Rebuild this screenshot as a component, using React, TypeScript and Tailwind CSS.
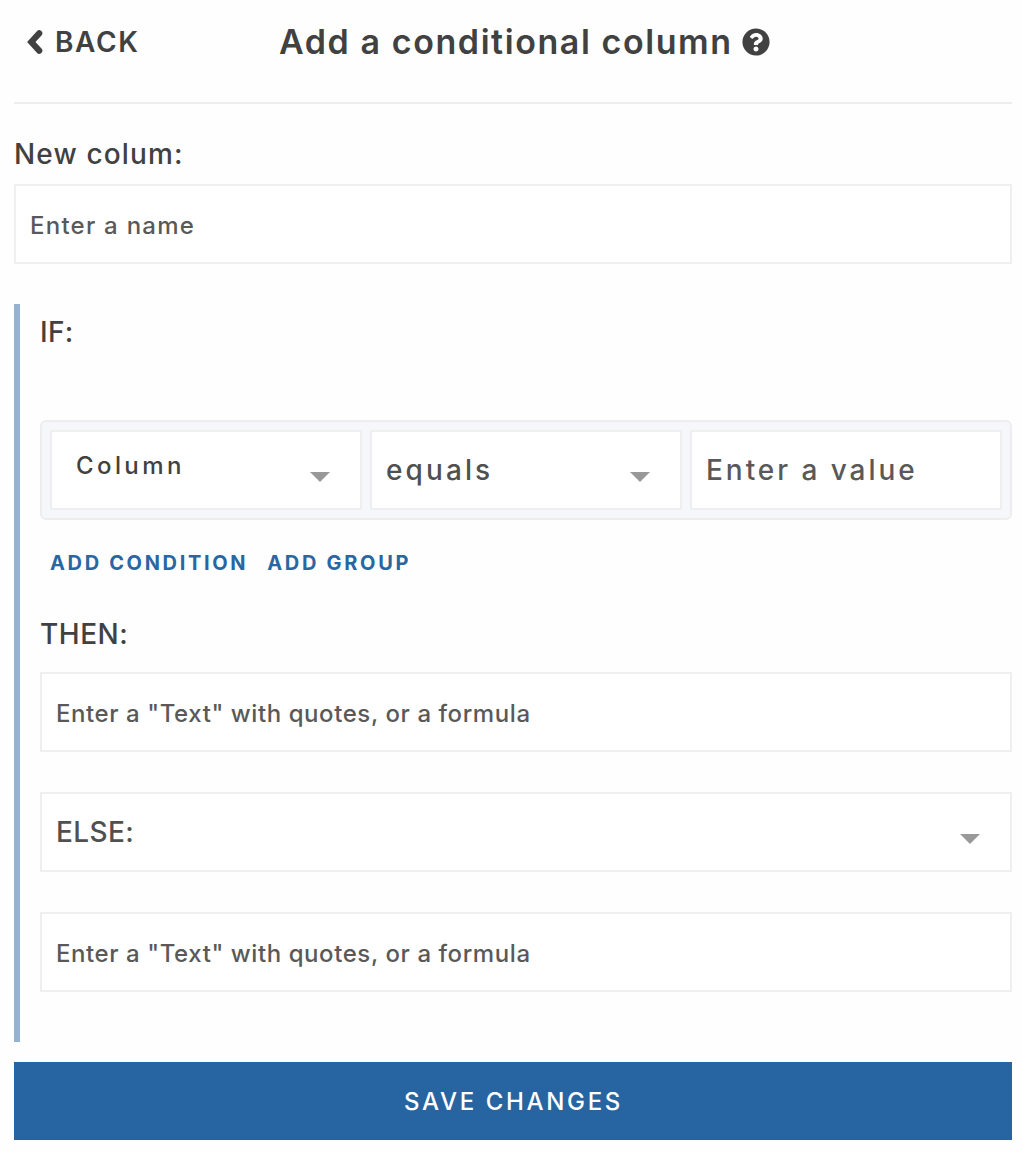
import type { ReactNode } from "react";
import { FaQuestionCircle } from "react-icons/fa";

function Caret() {
  return (
    <svg className="h-[10px] w-5 shrink-0" viewBox="0 0 20 10" aria-hidden="true">
      <path d="M0 0H20L10 10Z" fill="#999999" />
    </svg>
  );
}

function BackChevron() {
  return (
    <svg className="mr-3 h-6 w-4 shrink-0" viewBox="0 0 16 24" fill="none" aria-hidden="true">
      <path d="M12.2 3.3L4.3 12L12.2 20.7" stroke="currentColor" strokeWidth="6.2" strokeLinecap="round" />
    </svg>
  );
}

function Box({ children, className = "" }: { children: ReactNode; className?: string }) {
  return (
    <div className={`flex h-20 border-2 border-[#efefef] bg-white ${className}`}>{children}</div>
  );
}

function FormulaField() {
  return (
    <Box className="items-center pl-[14px] pt-[4px] text-2xl tracking-[0.58px] text-[#595959]">
      Enter a "Text" with quotes, or a formula
    </Box>
  );
}

export default function App() {
  return (
    <main className="min-h-[1152px] bg-[#fefefe] pl-[14px] pr-[10px] font-['Inter',sans-serif] font-medium text-[#414141]">
      <header className="flex h-[104px] items-start border-b-2 border-[#ededed] pt-[18px]">
        <button className="flex h-12 w-[265px] items-center pl-[13px] text-[28px] font-semibold tracking-[1.6px]">
          <BackChevron />
          BACK
        </button>
        <h1 className="-mt-px flex h-12 items-center text-[34px] font-semibold tracking-[1.58px]">
          Add a conditional column
          <FaQuestionCircle className="ml-[9px] mt-px size-7" />
        </h1>
      </header>

      <label className="mt-[30px] flex h-10 items-center text-[28px] tracking-[1.15px]">New colum:</label>
      <Box className="mt-[10px] items-center pl-[14px] pt-[4px] text-2xl tracking-[1.25px] text-[#595959]">
        Enter a name
      </Box>

      <section className="mt-10 h-[738px] border-l-[6px] border-[#96b2d2] pl-5">
        <div className="flex h-14 items-center text-[28px] tracking-[0.3px]">IF:</div>

        <div className="mt-[60px] grid h-[100px] grid-cols-3 gap-2 rounded-md border-2 border-[#ededed] bg-[#f5f7fb] p-2">
          <Box className="items-center justify-between pl-[24px] pr-[30px]">
            <span className="-mt-2 text-2xl tracking-[3.4px]">Column</span>
            <span className="mt-[13px]"><Caret /></span>
          </Box>
          <Box className="items-center justify-between pl-[14px] pr-[30px] text-[#505050]">
            <span className="text-[28px] tracking-[3.1px]">equals</span>
            <span className="mt-[13px]"><Caret /></span>
          </Box>
          <Box className="items-center pl-[14px] text-[28px] tracking-[2.95px] text-[#595959]">Enter a value</Box>
        </div>

        <div className="mt-[28px] flex h-[30px] items-center gap-[19px] pl-[10px] text-xl font-bold text-[#2a66a2]">
          <button className="tracking-[2.65px]">ADD CONDITION</button>
          <button className="tracking-[2.7px]">ADD GROUP</button>
        </div>

        <div className="mt-[36px] flex h-10 items-center text-[28px] tracking-[0.5px]">THEN:</div>
        <div className="mt-[18px] grid gap-10">
          <FormulaField />
          <Box className="items-center justify-between pl-[14px] pr-[30px] text-[#505050]">
            <span className="text-[28px] tracking-[0.4px]">ELSE:</span>
            <span className="mt-[13px]"><Caret /></span>
          </Box>
          <FormulaField />
        </div>
      </section>

      <button className="mt-5 h-[78px] w-full bg-[#2765a2] pl-px pt-[2px] text-2xl tracking-[2.65px] text-white">
        SAVE CHANGES
      </button>
    </main>
  );
}
